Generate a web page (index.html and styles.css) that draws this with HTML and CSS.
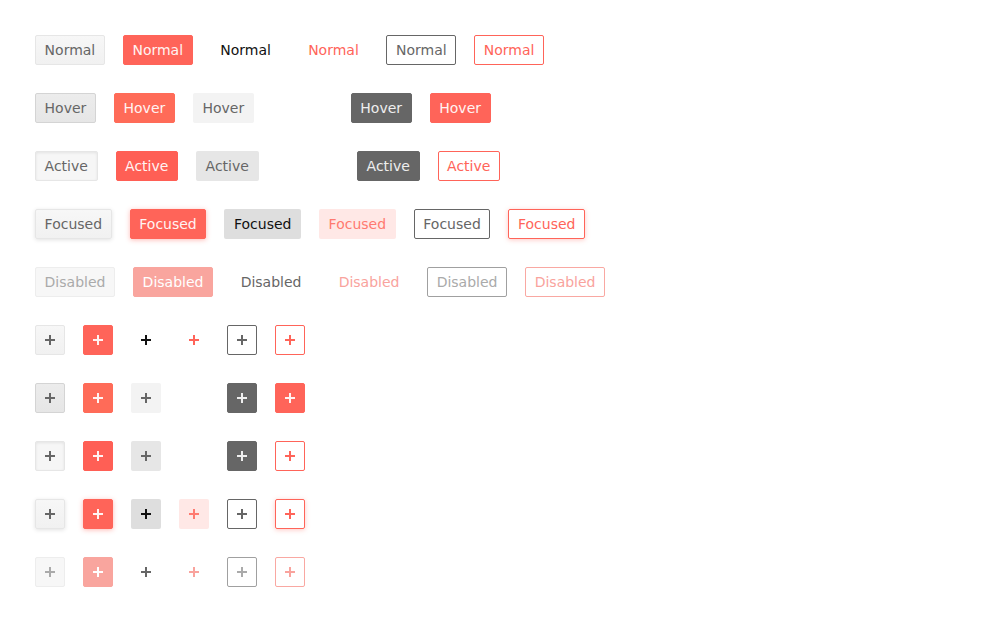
FILE: index.html
```html
<!DOCTYPE html>
<html>
<head>
<meta charset="utf-8">
<link rel="stylesheet" href="styles.css">
</head>
<body>
<div class="page">
  <div class="row">
    <button class="btn default">Normal</button>
    <button class="btn primary">Normal</button>
    <button class="btn text">Normal</button>
    <button class="btn link">Normal</button>
    <button class="btn outline">Normal</button>
    <button class="btn outline-primary">Normal</button>
  </div>
  <div class="row">
    <button class="btn default hover">Hover</button>
    <button class="btn primary hover">Hover</button>
    <button class="btn text hover">Hover</button>
    <button class="btn link hidden">Hover</button>
    <button class="btn outline hover">Hover</button>
    <button class="btn outline-primary hover">Hover</button>
  </div>
  <div class="row">
    <button class="btn default active">Active</button>
    <button class="btn primary active">Active</button>
    <button class="btn text active">Active</button>
    <button class="btn link hidden">Active</button>
    <button class="btn outline active">Active</button>
    <button class="btn outline-primary active">Active</button>
  </div>
  <div class="row">
    <button class="btn default focused">Focused</button>
    <button class="btn primary focused">Focused</button>
    <button class="btn text focused">Focused</button>
    <button class="btn link focused">Focused</button>
    <button class="btn outline focused">Focused</button>
    <button class="btn outline-primary focused">Focused</button>
  </div>
  <div class="row">
    <button class="btn default disabled">Disabled</button>
    <button class="btn primary disabled">Disabled</button>
    <button class="btn text disabled">Disabled</button>
    <button class="btn link disabled">Disabled</button>
    <button class="btn outline disabled">Disabled</button>
    <button class="btn outline-primary disabled">Disabled</button>
  </div>

  <div class="row">
    <button class="btn icon default"><span class="plus"></span></button>
    <button class="btn icon primary"><span class="plus"></span></button>
    <button class="btn icon text"><span class="plus"></span></button>
    <button class="btn icon link"><span class="plus"></span></button>
    <button class="btn icon outline"><span class="plus"></span></button>
    <button class="btn icon outline-primary"><span class="plus"></span></button>
  </div>
  <div class="row">
    <button class="btn icon default hover"><span class="plus"></span></button>
    <button class="btn icon primary hover"><span class="plus"></span></button>
    <button class="btn icon text hover"><span class="plus"></span></button>
    <button class="btn icon link hidden"><span class="plus"></span></button>
    <button class="btn icon outline hover"><span class="plus"></span></button>
    <button class="btn icon outline-primary hover"><span class="plus"></span></button>
  </div>
  <div class="row">
    <button class="btn icon default active"><span class="plus"></span></button>
    <button class="btn icon primary active"><span class="plus"></span></button>
    <button class="btn icon text active"><span class="plus"></span></button>
    <button class="btn icon link hidden"><span class="plus"></span></button>
    <button class="btn icon outline active"><span class="plus"></span></button>
    <button class="btn icon outline-primary active"><span class="plus"></span></button>
  </div>
  <div class="row">
    <button class="btn icon default focused"><span class="plus"></span></button>
    <button class="btn icon primary focused"><span class="plus"></span></button>
    <button class="btn icon text focused"><span class="plus"></span></button>
    <button class="btn icon link focused"><span class="plus"></span></button>
    <button class="btn icon outline focused"><span class="plus"></span></button>
    <button class="btn icon outline-primary focused"><span class="plus"></span></button>
  </div>
  <div class="row">
    <button class="btn icon default disabled"><span class="plus"></span></button>
    <button class="btn icon primary disabled"><span class="plus"></span></button>
    <button class="btn icon text disabled"><span class="plus"></span></button>
    <button class="btn icon link disabled"><span class="plus"></span></button>
    <button class="btn icon outline disabled"><span class="plus"></span></button>
    <button class="btn icon outline-primary disabled"><span class="plus"></span></button>
  </div>
</div>
</body>
</html>
```

FILE: styles.css
```css
html, body {
  margin: 0;
  padding: 0;
  background: #fff;
}
.page {
  padding: 35px;
  display: flex;
  flex-direction: column;
  gap: 28px;
  font-family: "DejaVu Sans", sans-serif;
}
.row {
  display: flex;
  gap: 18px;
  align-items: flex-start;
}
.btn {
  box-sizing: border-box;
  height: 30px;
  padding: 0 8.6px;
  border: 1px solid transparent;
  border-radius: 2px;
  background: transparent;
  font-family: "DejaVu Sans", sans-serif;
  font-size: 14px;
  line-height: 28px;
  color: #666;
  display: inline-flex;
  align-items: center;
  justify-content: center;
  white-space: nowrap;
  margin: 0;
}
.btn.icon {
  width: 30px;
  padding: 0;
}
.plus {
  position: relative;
  width: 10px;
  height: 10px;
  display: block;
  flex: none;
}
.plus::before, .plus::after {
  content: "";
  position: absolute;
  background: currentColor;
}
.plus::before {
  left: 0;
  top: 4px;
  width: 10px;
  height: 2px;
}
.plus::after {
  left: 4px;
  top: 0;
  width: 2px;
  height: 10px;
}
.hidden { visibility: hidden; }

/* default */
.default {
  background: linear-gradient(#f7f7f7, #f1f1f1);
  border-color: #e6e6e6;
  color: #666;
}
.default.hover {
  background: linear-gradient(#ececec, #e6e6e6);
  border-color: #d4d4d4;
}
.default.active {
  background: #f6f6f6;
  border-color: #e6e6e6;
  box-shadow: inset 0 1px 3px rgba(0,0,0,0.08);
}
.default.focused {
  box-shadow: 0 1px 4px rgba(0,0,0,0.12);
}
.default.disabled {
  background: #f7f7f7;
  border-color: #ededed;
  color: #aaa;
}

/* primary */
.primary {
  background: #ff6459;
  border-color: #ff6459;
  color: #fff3f2;
}
.primary.hover {
  background: #ff6b58;
  border-color: #ff6b58;
}
.primary.active {
  background: #ff5f55;
  border-color: #ff5f55;
}
.primary.focused {
  box-shadow: 0 1px 5px rgba(255,100,89,0.45);
}
.primary.disabled {
  background: #f9a59e;
  border-color: #f9a59e;
  color: #fff;
}

/* text */
.text {
  color: #111;
}
.text.hover {
  background: #f3f3f3;
  color: #666;
}
.text.active {
  background: #e6e6e6;
  color: #666;
}
.text.focused {
  background: #dedede;
  color: #111;
}
.text.disabled {
  color: #666;
}

/* link */
.link {
  color: #ff6459;
}
.link.focused {
  background: #ffe8e6;
  color: #ff7a70;
}
.link.disabled {
  color: #f9a39d;
}

/* outline */
.outline {
  border-color: #666;
  color: #666;
}
.outline.hover, .outline.active {
  background: #666;
  border-color: #666;
  color: #eee;
}
.outline.disabled {
  border-color: #a0a0a0;
  color: #aaa;
}

/* outline primary */
.outline-primary {
  border-color: #ff6459;
  color: #ff6459;
}
.outline-primary.hover {
  background: #ff6459;
  color: #fff3f2;
}
.outline-primary.focused {
  box-shadow: 0 1px 5px rgba(255,100,89,0.35);
}
.outline-primary.disabled {
  border-color: #f9a8a2;
  color: #f9a39d;
}
```
